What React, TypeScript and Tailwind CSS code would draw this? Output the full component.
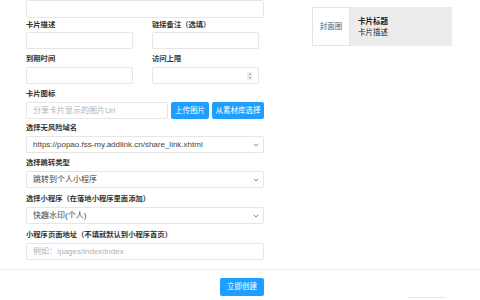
import type { ReactNode } from 'react'

const font = { fontFamily: '"Liberation Sans","Noto Sans CJK SC",sans-serif' }

function Label({ children, className = '' }: { children: ReactNode; className?: string }) {
  return (
    <div className={`text-[7.3px] font-bold leading-[11px] text-[#333] ${className}`}>{children}</div>
  )
}

function Input({ placeholder, className = '', children }: { placeholder?: string; className?: string; children?: ReactNode }) {
  return (
    <div
      className={`flex h-[17px] items-center rounded-[2px] border border-[#e6e6e6] bg-white px-[6px] text-[8px] text-[#b0b0b0] ${className}`}
    >
      <span className="flex-1">{placeholder}</span>
      {children}
    </div>
  )
}

function Select({ value }: { value: string }) {
  return (
    <div className="flex h-[17px] items-center rounded-[2px] border border-[#e6e6e6] bg-white pl-[6px] pr-[4px] text-[8px] text-[#444]">
      <span className="flex-1">{value}</span>
      <svg width="6" height="4" viewBox="0 0 6 4" fill="none">
        <path d="M0.8 0.8 L3 3 L5.2 0.8" stroke="#777" strokeWidth="0.9" />
      </svg>
    </div>
  )
}

export default function App() {
  return (
    <div className="relative h-[300px] w-[480px] overflow-hidden bg-white" style={font}>
      <div className="flex px-[26px]">
        <div className="w-[238px]">
          <Input className="h-[18px]" />

          <div className="flex gap-[19px]">
            <div className="w-[107px]">
              <Label className="pt-[1px] pb-[2px]">卡片描述</Label>
              <Input />
            </div>
            <div className="w-[107px]">
              <Label className="pt-[1px] pb-[2px]">链接备注（选填）</Label>
              <Input />
            </div>
          </div>

          <div className="flex gap-[19px]">
            <div className="w-[107px]">
              <Label className="pt-[4px] pb-[3px]">到期时间</Label>
              <Input />
            </div>
            <div className="w-[107px]">
              <Label className="pt-[4px] pb-[3px]">访问上限</Label>
              <Input>
                <span className="flex h-[8px] w-[5px] flex-col items-center justify-center rounded-[1px] bg-[#eee] text-[4px] leading-[4px] text-[#999]">
                  <span>▴</span>
                  <span>▾</span>
                </span>
              </Input>
            </div>
          </div>

          <Label className="pt-[4px] pb-[3px]">卡片图标</Label>
          <div className="flex gap-[3px]">
            <Input placeholder="分享卡片显示的图片Url" className="w-[142px]" />
            <button className="h-[17px] w-[38px] rounded-[2px] bg-[#1e9fff] text-[7.5px] text-white">上传图片</button>
            <button className="h-[17px] w-[52px] rounded-[2px] bg-[#1e9fff] text-[7.5px] text-white">从素材库选择</button>
          </div>

          <Label className="pt-[3px] pb-[3px]">选择无风险域名</Label>
          <Select value="https://popao.fss-my.addlink.cn/share_link.xhtml" />

          <Label className="pt-[4px] pb-[3px]">选择跳转类型</Label>
          <Select value="跳转到个人小程序" />

          <Label className="pt-[5px] pb-[3px]">选择小程序（在落地小程序里面添加）</Label>
          <Select value="快趣水印(个人)" />

          <Label className="pt-[5px] pb-[3px]">小程序页面地址（不填就默认到小程序首页）</Label>
          <Input placeholder="例如：/pages/index/index" />
        </div>

        <div className="ml-[48px] pt-[7px]">
          <div className="flex h-[39px] w-[140px] bg-[#ececec]">
            <div className="flex w-[38px] items-center justify-center border border-[#e3e3e3] bg-white text-[7.5px] text-[#555]">
              封面图
            </div>
            <div className="flex flex-col justify-center pl-[8px] text-[7.5px] leading-[11px] text-[#222]">
              <span className="font-bold">卡片标题</span>
              <span>卡片描述</span>
            </div>
          </div>
        </div>
      </div>

      <div className="mt-[9px] h-px w-full bg-[#eeeeee]" />

      <div className="flex pl-[220px] pt-[8px]">
        <button className="h-[18px] w-[44px] rounded-[2px] bg-[#1e9fff] text-[7.5px] text-white">立即创建</button>
      </div>

      <div className="absolute bottom-[2px] left-[407px] h-px w-[38px] bg-[#e4e4e4]" />
    </div>
  )
}
